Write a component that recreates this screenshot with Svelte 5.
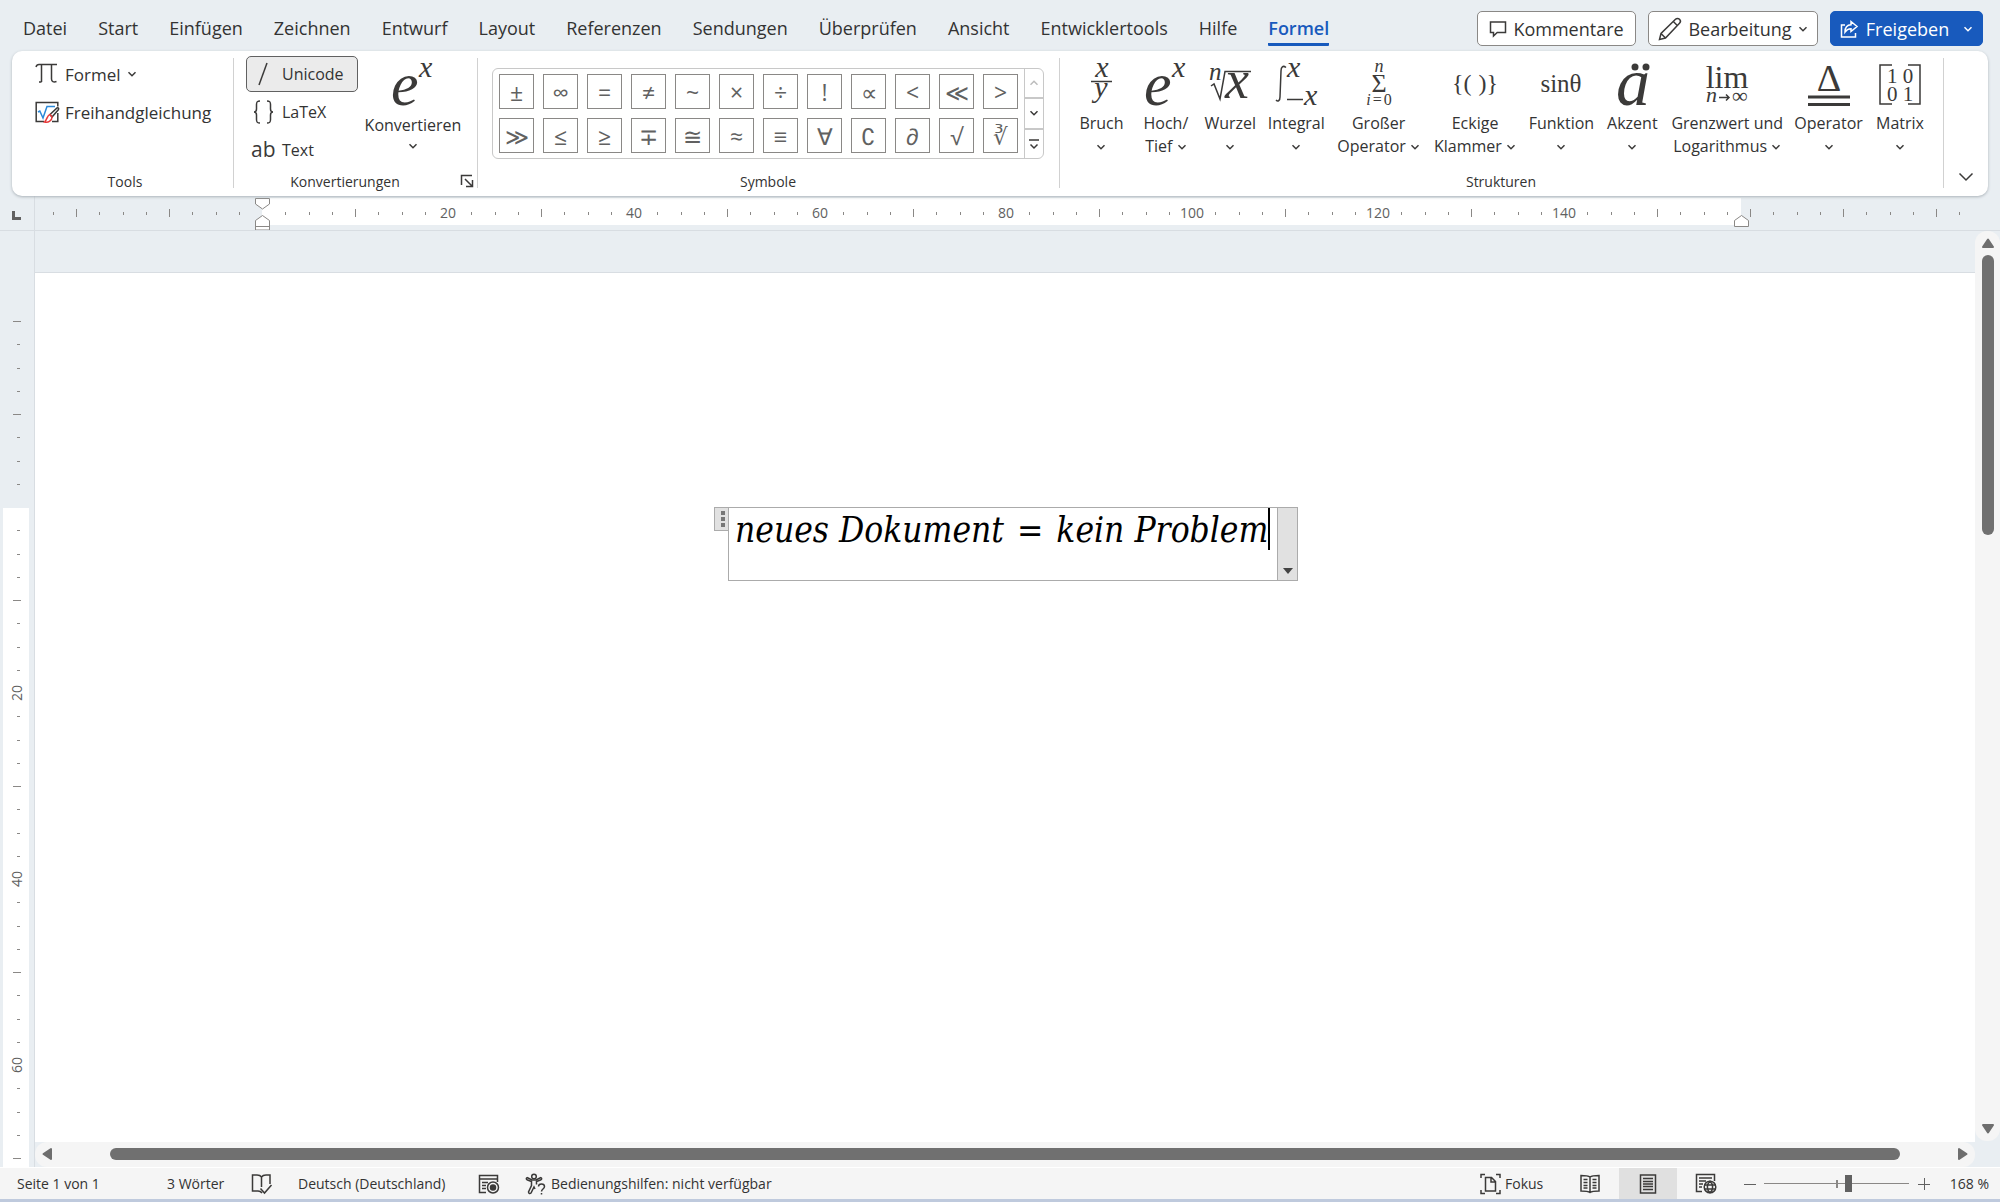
<script lang="ts">
  const tabs = [
    'Datei', 'Start', 'Einfügen', 'Zeichnen', 'Entwurf', 'Layout', 'Referenzen', 'Sendungen',
    'Überprüfen', 'Ansicht', 'Entwicklertools', 'Hilfe', 'Formel'
  ];
  let activeTab = $state('Formel');
  let zoom = $state(168);

  const symbols = [
    '±', '∞', '=', '≠', '~', '×', '÷', '!', '∝', '<', '≪', '>',
    '≫', '≤', '≥', '∓', '≅', '≈', '≡', '∀', '∁', '∂', '√', '∛'
  ];

  const structures = [
    { id: 'fraction', lines: ['Bruch', ''] },
    { id: 'script', lines: ['Hoch/', 'Tief'] },
    { id: 'radical', lines: ['Wurzel', ''] },
    { id: 'integral', lines: ['Integral', ''] },
    { id: 'sum', lines: ['Großer', 'Operator'] },
    { id: 'bracket', lines: ['Eckige', 'Klammer'] },
    { id: 'function', lines: ['Funktion', ''] },
    { id: 'accent', lines: ['Akzent', ''] },
    { id: 'limit', lines: ['Grenzwert und', 'Logarithmus'] },
    { id: 'operator', lines: ['Operator', ''] },
    { id: 'matrix', lines: ['Matrix', ''] }
  ];

  // one ruler step is 2.5 mm, every eighth step carries a number
  const step = 23.25;
  const range = (from: number, to: number) =>
    Array.from({ length: to - from + 1 }, (_, i) => from + i).filter((n) => n !== 0);
  const hTicks = range(-9, 73);
  const vTicks = range(-8, 28);
  const hPos = (n: number) => Math.round(262 + n * step);
  const vPos = (n: number) => Math.round(276 + n * step);
</script>

{#snippet chevron()}
  <svg class="chevron" width="10" height="10" viewBox="0 0 10 10"><path d="M1.5 3.2 5 6.7 8.5 3.2" /></svg>
{/snippet}

{#snippet scriptIcon()}
  <text x="0" y="43" font-size="62">e</text>
  <text x="28" y="15" font-size="30">x</text>
{/snippet}

<div class="app">
  <header>
    <nav>
      {#each tabs as tab}
        <button class="tab" class:active={tab === activeTab} onclick={() => (activeTab = tab)}>{tab}</button>
      {/each}
    </nav>
    <div class="actions">
      <button class="action comments">
        <svg width="18" height="18" viewBox="0 0 18 18"><path d="M1.5 2h15v10.5H8.2L4.5 16v-3.5h-3z" /></svg>
        Kommentare
      </button>
      <button class="action editing">
        <svg width="24" height="24" viewBox="0 0 24 24"><path d="m1.5 22.500 1.500-6L17.500 2.300a2.800 2.800 0 0 1 4 4L7.500 21zM15.300 4.500l4 4M3 16.500 7.500 21" /></svg>
        Bearbeitung {@render chevron()}
      </button>
      <button class="action share">
        <svg width="18" height="18" viewBox="0 0 18 18"><path d="M5 5H1.500v12h14v-4M11 1.500l6 5-6 5V8.800c-3 0-4.500 1-6 3.200 0-4 2-7 6-7.200z" /></svg>
        Freigeben {@render chevron()}
      </button>
    </div>
  </header>

  <section class="ribbon">
    <div class="group tools">
      <div class="stack">
        <button class="row">
          <svg width="24" height="24" viewBox="0 0 24 24"><path d="M1 5c.5-2 1.500-2.500 3-2.500h18M6.500 2.500V20M6.500 20H4M16.500 2.500V17c0 2.500 2 3.500 5 2.500" /></svg>
          Formel {@render chevron()}
        </button>
        <button class="row">
          <svg width="24" height="24" viewBox="0 0 24 24">
            <path d="M9 21.500H1.200v-19h21.600v4M22.800 13v8.500H17" />
            <path class="blue" d="m3 12 1.800-1L8 18l4-11.500h8" />
            <path d="M15 14.500 22 8c1.500-.5 2 .5 1.500 1.500L17 17z" />
            <path class="red" d="M15 14.500c-3 .5-2.500 5-5.500 7.500 4 1 7.500-1.500 7.500-5z" />
          </svg>
          Freihandgleichung
        </button>
      </div>
      <div class="caption"><span>Tools</span></div>
    </div>

    <div class="group conversions">
      <div class="content">
        <div class="stack">
          <button class="row format selected">
            <svg width="24" height="24" viewBox="0 0 24 24"><path d="M15 1 7 23" /></svg>
            Unicode
          </button>
          <button class="row format">
            <svg width="24" height="24" viewBox="0 0 24 24"><path d="M8 1C5 1 4.500 2 4.500 4.500V9c0 2-1 3-2.500 3 1.500 0 2.500 1 2.500 3v4.500C4.500 22 5 23 8 23M15 1c3 0 3.500 1 3.500 3.500V9c0 2 1 3 2.500 3-1.500 0-2.500 1-2.500 3v4.500c0 2.500-.5 3.500-3.500 3.500" /></svg>
            LaTeX
          </button>
          <button class="row format">
            <svg width="24" height="24" viewBox="0 0 24 24"><text x="-1" y="19" font-size="21">ab</text></svg>
            Text
          </button>
        </div>
        <button class="convert">
          <svg class="math" width="44" height="48" viewBox="0 0 44 48">{@render scriptIcon()}</svg>
          <span>Konvertieren</span>
          {@render chevron()}
        </button>
      </div>
      <div class="caption">
        <span>Konvertierungen</span>
        <button class="launcher" aria-label="Konvertierungsoptionen">
          <svg width="14" height="14" viewBox="0 0 14 14"><path d="M1.500 11V1.500H12M5 5l7 7M12.500 6v6.500H6" /></svg>
        </button>
      </div>
    </div>

    <div class="group symbols">
      <div class="gallery">
        <div class="cells">
          {#each symbols as symbol}
            <button class="cell">{symbol}</button>
          {/each}
        </div>
        <div class="pager">
          <button class="off" aria-label="Zeile nach oben"><svg class="chevron" width="10" height="10" viewBox="0 0 10 10"><path d="M1.500 6.700 5 3.200l3.500 3.500" /></svg></button>
          <button aria-label="Zeile nach unten">{@render chevron()}</button>
          <button aria-label="Weitere Symbole"><svg class="chevron" width="12" height="14" viewBox="0 0 12 14"><path d="M1 3h10M2.500 7.500 6 11l3.500-3.500" /></svg></button>
        </div>
      </div>
      <div class="caption"><span>Symbole</span></div>
    </div>

    <div class="group structures">
      <div class="structure-list">
        {#each structures as item}
          <button class="structure">
            <svg class="math" width="44" height="48" viewBox="0 0 44 48">
              {#if item.id === 'fraction'}
                <text x="23" y="15" font-size="30" text-anchor="middle">x</text>
                <path d="M12 19.500h21" />
                <text x="22" y="35" font-size="30" text-anchor="middle">y</text>
              {:else if item.id === 'script'}
                {@render scriptIcon()}
              {:else if item.id === 'radical'}
                <text x="1" y="18" font-size="25">n</text>
                <path d="m3 24 3-2 6 15L17 9.500h26" />
                <text x="17" y="36" font-size="54">x</text>
              {:else if item.id === 'integral'}
                <path d="M2 38c2 2 4 .5 4-3L7 9c0-4 2-6 5-3.500" />
                <text x="13" y="15" font-size="30">x</text>
                <path d="M13 37.500h16" />
                <text x="30" y="43" font-size="30">x</text>
              {:else if item.id === 'sum'}
                <text x="22" y="10" font-size="18" text-anchor="middle">n</text>
                <text class="upright" x="22" y="30" font-size="26" text-anchor="middle">Σ</text>
                <text x="22" y="43" font-size="16" text-anchor="middle"><tspan>i</tspan><tspan class="upright" dx="2">=</tspan><tspan class="upright" dx="2">0</tspan></text>
              {:else if item.id === 'bracket'}
                <text class="upright" x="-1" y="29" font-size="24">&#123;(</text>
                <text class="upright" x="45" y="29" font-size="24" text-anchor="end">)&#125;</text>
              {:else if item.id === 'function'}
                <text class="upright" x="22" y="30" font-size="25" text-anchor="middle">sinθ</text>
              {:else if item.id === 'accent'}
                <text x="6" y="43" font-size="68">a</text>
                <circle cx="25" cy="5" r="3.500" /><circle cx="36" cy="5" r="3.500" />
              {:else if item.id === 'limit'}
                <text class="upright" x="22" y="26" font-size="32" text-anchor="middle">lim</text>
                <text x="1" y="40" font-size="22">n</text>
                <path d="M14 35.500h10M21 32.500l3 3-3 3" />
                <text class="upright" x="27" y="41" font-size="22">∞</text>
              {:else if item.id === 'operator'}
                <text class="upright" x="22" y="29" font-size="38" text-anchor="middle">Δ</text>
                <path class="thick" d="M1 35h42M1 42.500h42" />
              {:else}
                <path d="M14 3H2v39h12M30 3h12v39H30" />
                <text class="upright" x="22" y="21" font-size="21" text-anchor="middle">1 0</text>
                <text class="upright" x="22" y="39" font-size="21" text-anchor="middle">0 1</text>
              {/if}
            </svg>
            <span>{item.lines[0]}</span>
            <span>{item.lines[1]} {@render chevron()}</span>
          </button>
        {/each}
      </div>
      <div class="caption"><span>Strukturen</span></div>
    </div>

    <button class="collapse" aria-label="Menüband reduzieren">
      <svg width="16" height="10" viewBox="0 0 16 10"><path d="m1.500 1.500 6.500 6.500 6.500-6.500" /></svg>
    </button>
  </section>

  <div class="ruler">
    <svg width="100%" height="34">
      <path class="tabstop" d="M13.500 15v7.500H21" />
      <path class="edge" d="M34.500 0v34" />
      <rect class="paper" x="262" y="2" width="1479" height="27" />
      {#each hTicks as n}
        {#if n % 8 === 0 && n > 0 && n < 64}
          <text x={hPos(n)} y="22" text-anchor="middle">{n * 2.5}</text>
        {:else if n % 4 === 0}
          <path d="M{hPos(n) + 0.5} 13v8" />
        {:else}
          <path d="M{hPos(n) + 0.5} 16v3" />
        {/if}
      {/each}
      <path class="marker" d="M255.500 2.500h14V8l-7 5-7-5z" />
      <path class="marker" d="M255.500 34V24.500l7-5 7 5V34zM255.500 30.500h14" />
      <path class="marker" d="M1734.500 30.500v-6l7-5 7 5v6z" />
    </svg>
  </div>

  <div class="workspace">
    <div class="v-ruler">
      <svg width="34" height="100%">
        <rect class="paper" x="3" y="277" width="26" height="100%" />
        {#each vTicks as n}
          {#if n % 8 === 0 && n > 0}
            <text transform="translate(22 {vPos(n)}) rotate(-90)" text-anchor="middle">{n * 2.5}</text>
          {:else if n % 4 === 0}
            <path d="M13 {vPos(n) + 0.5}h8" />
          {:else}
            <path d="M17 {vPos(n) + 0.5}h3" />
          {/if}
        {/each}
      </svg>
    </div>

    <div class="canvas">
      <main class="page">
        <div class="equation">
          <span class="handle"><i></i><i></i><i></i></span>
          <div class="formula">
            <span>neues Dokument <span class="relation">=</span> kein Problem</span>
            <span class="caret"></span>
          </div>
          <button class="drop" aria-label="Formeloptionen">
            <svg width="12" height="8" viewBox="0 0 12 8"><path d="M1 1h10L6 7z" /></svg>
          </button>
        </div>
      </main>
      <div class="h-scroll">
        <svg width="12" height="14" viewBox="0 0 12 14"><path d="M10 2v10L2.500 7z" /></svg>
        <div class="track"><div class="thumb"></div></div>
        <svg width="12" height="14" viewBox="0 0 12 14"><path d="M2 2v10l7.500-5z" /></svg>
      </div>
    </div>

    <div class="v-scroll">
      <svg width="14" height="12" viewBox="0 0 14 12"><path d="M2 10h10L7 2.500z" /></svg>
      <div class="track"><div class="thumb"></div></div>
      <svg width="14" height="12" viewBox="0 0 14 12"><path d="M2 2h10L7 9.500z" /></svg>
    </div>
  </div>

  <footer>
    <div class="status-left">
      <span class="pages">Seite 1 von 1</span>
      <span class="words">3 Wörter</span>
      <button class="proof" aria-label="Rechtschreibprüfung">
        <svg width="22" height="22" viewBox="0 0 22 22"><path d="M10.500 4C9.500 2.500 8 2 6 2H1.500v16H7c2 0 3 .5 4 2M10.500 4c1-1.500 2.500-2 4.500-2h4v9M10.500 4v10M9.500 15.500l4 4.500 7-8" /></svg>
      </button>
      <span class="lang">Deutsch (Deutschland)</span>
      <button class="macro" aria-label="Makro aufzeichnen">
        <svg width="22" height="20" viewBox="0 0 22 20"><path d="M8 18.500H1.500v-17h18V8M1.500 5h18M4 8.500h6M4 11.500h4M4 14.500h4" /><circle cx="15" cy="13.500" r="5.500" /><circle class="solid" cx="15" cy="13.500" r="2.500" /></svg>
      </button>
      <span class="access">
        <svg width="22" height="22" viewBox="0 0 22 22"><circle cx="9" cy="3.500" r="2.300" /><path d="M2 4.500C1 5.500 1 6.500 2.500 7L6.500 8.500v4L3.500 19c0 1.500 1.500 2 2.500 1l3-6 1 2M16 4.500c1 1 1 2-.5 2.500l-4 1.500v3M2 4.500 7 7h4l5-2.500M13.500 13.500c0-3.500 6-3.500 6 0 0 2.500-3 2.500-3 5M16.500 20v1.500" /></svg>
        Bedienungshilfen: nicht verfügbar
      </span>
    </div>
    <div class="status-right">
      <button class="focus">
        <svg width="21" height="22" viewBox="0 0 21 22"><path d="M1 5V1.500h4M16 1.500h4V5M1 17v3.500h4M16 20.500h4V17M5.500 4.500h6l4 4V18h-10zM11 4.500V9h4.500" /></svg>
        Fokus
      </button>
      <button class="view" aria-label="Lesemodus">
        <svg width="20" height="20" viewBox="0 0 20 20"><path d="M10 3C8 1.500 4 1.500 1 1.500V17c3 0 7 0 9 1.500 2-1.500 6-1.500 9-1.500V1.500c-3 0-7 0-9 1.500zM10 3v15M3.500 5.500h4M3.500 8.500h4M3.500 11.500h4M3.500 14h4M12.500 5.500h4M12.500 8.500h4M12.500 11.500h4M12.500 14h4" /></svg>
      </button>
      <button class="view current" aria-label="Seitenlayout">
        <svg width="18" height="20" viewBox="0 0 18 20"><path d="M1.500 1h15v18h-15zM4 4.500h10M4 7.500h10M4 10h10M4 12.500h10M4 15.500h10" /></svg>
      </button>
      <button class="view" aria-label="Weblayout">
        <svg width="22" height="21" viewBox="0 0 22 21"><path d="M7 18.500H1.500v-17h18V8M4 5h13M4 8h7M4 11h4M4 14h3" /><circle cx="15" cy="14" r="5.800" /><path d="M9.500 12h11M9.500 16h11M15 8.200c-3.500 3-3.500 8.600 0 11.600 3.500-3 3.500-8.600 0-11.600z" /></svg>
      </button>
      <button class="step" aria-label="Verkleinern"><svg width="12" height="12" viewBox="0 0 12 12"><path d="M0 6.500h12" /></svg></button>
      <input type="range" min="10" max="280" aria-label="Zoom" bind:value={zoom} />
      <button class="step" aria-label="Vergrößern"><svg width="12" height="12" viewBox="0 0 12 12"><path d="M0 6.500h12M6.500 0v12" /></svg></button>
      <span class="percent">{zoom} %</span>
    </div>
  </footer>
</div>

<style>
  :global(body) {
    margin: 0;
    background: #e9eef2;
  }

  .app {
    min-height: 100vh;
    display: flex;
    flex-direction: column;
    box-sizing: border-box;
    border-bottom: 3px solid #bfcadd;
    font-family: 'Open Sans', 'Noto Sans', sans-serif;
    color: #333;
  }

  .app * {
    box-sizing: border-box;
  }

  button {
    border: 0;
    padding: 0;
    background: none;
    font: inherit;
    color: inherit;
  }

  svg {
    display: block;
    flex: none;
    overflow: visible;
    fill: none;
    stroke: #3b3a39;
    stroke-width: 1.5;
  }

  svg text {
    fill: #3b3a39;
    stroke: none;
  }

  .chevron {
    display: inline-block;
  }

  header {
    display: flex;
    justify-content: space-between;
    height: 51px;
    padding: 0 17px 0 23px;
  }

  nav {
    display: flex;
    gap: 31px;
    padding-top: 14px;
    font-size: 18px;
    line-height: 29px;
  }

  .tab {
    height: 32px;
    border-bottom: 3px solid transparent;
    border-radius: 1px;
    white-space: nowrap;
  }

  .tab.active {
    color: #185abd;
    font-weight: 600;
    border-color: #185abd;
  }

  .actions {
    display: flex;
    gap: 12px;
    padding-top: 11px;
    font-size: 18px;
  }

  .action {
    display: flex;
    align-items: center;
    justify-content: center;
    gap: 6px;
    height: 35px;
    border: 1px solid #8a8886;
    border-radius: 5px;
    background: #fff;
    white-space: nowrap;
  }

  .comments {
    width: 159px;
  }

  .editing {
    width: 170px;
  }

  .share {
    width: 153px;
    gap: 8px;
    border-color: #185abd;
    background: #185abd;
    color: #fff;
  }

  .share svg {
    stroke: #fff;
  }

  .share .chevron {
    margin-left: 6px;
  }

  .ribbon {
    position: relative;
    display: flex;
    height: 145px;
    margin: 0 12px;
    border-radius: 10px;
    background: #fff;
    box-shadow: 0 1px 3px #aab2b8;
    font-size: 16px;
  }

  .group {
    display: flex;
    flex-direction: column;
    justify-content: space-between;
    padding-bottom: 4px;
    background: linear-gradient(#d1d1d1, #d1d1d1) right 7px / 1px 130px no-repeat;
  }

  .tools {
    width: 222px;
    padding-left: 16px;
  }

  .conversions {
    width: 244px;
    padding-left: 12px;
  }

  .symbols {
    width: 582px;
    padding: 17px 16px 4px 14px;
  }

  .structures {
    flex: 1;
    padding: 0 12px 4px 10px;
  }

  .content {
    display: flex;
  }

  .stack {
    display: flex;
    flex-direction: column;
    gap: 2px;
    padding-top: 5px;
  }

  .row {
    display: flex;
    align-items: center;
    gap: 6px;
    height: 36px;
    padding-left: 7px;
    white-space: nowrap;
  }

  .tools .row {
    font-size: 17px;
  }

  .blue {
    stroke: #2b88d8;
  }

  .red {
    stroke: #e83b3b;
  }

  .format {
    width: 112px;
    padding-left: 5px;
    border: 1px solid transparent;
    border-radius: 5px;
  }

  .selected {
    border-color: #616161;
    background: #ebebeb;
  }

  .convert {
    display: flex;
    flex-direction: column;
    align-items: center;
    width: 110px;
    padding-top: 11px;
    line-height: 23px;
  }

  .convert span {
    padding: 4px 0;
  }

  .caption {
    display: flex;
    align-items: center;
    height: 22px;
    font-size: 14px;
    text-align: center;
  }

  .caption span {
    flex: 1;
  }

  .tools .caption {
    padding-right: 12px;
  }

  .conversions .caption {
    margin-left: -12px;
  }

  .conversions .caption span {
    padding-right: 4px;
  }

  .launcher {
    width: 18px;
  }

  .gallery {
    display: flex;
    height: 91px;
    border: 1px solid #c8c8c8;
    border-radius: 6px;
    overflow: hidden;
  }

  .cells {
    flex: 1;
    display: grid;
    grid-template-columns: repeat(12, 35px);
    grid-auto-rows: 35px;
    gap: 9px;
    padding: 5px 6px;
  }

  .cell {
    border: 1px solid #8a8886;
    color: #616161;
    font-size: 23px;
    line-height: 30px;
  }

  .pager {
    display: flex;
    flex-direction: column;
    width: 21px;
    border-left: 1px solid #c8c8c8;
  }

  .pager button {
    flex: 1;
    display: flex;
    align-items: center;
    justify-content: center;
  }

  .pager button + button {
    border-top: 2px solid #c8c8c8;
  }

  .off svg {
    stroke: #bdbdbd;
  }

  .structure-list {
    display: grid;
    grid-template-columns: 63fr 66fr 63fr 69fr 96fr 97fr 76fr 66fr 124fr 79fr 64fr;
    padding-top: 11px;
  }

  .structure {
    display: flex;
    flex-direction: column;
    align-items: center;
    line-height: 23px;
    white-space: nowrap;
  }

  .structure .math {
    margin-bottom: 2px;
  }

  .math text {
    font-family: 'Liberation Serif', serif;
    font-style: italic;
  }

  .math .upright {
    font-style: normal;
  }

  .math circle {
    fill: #3b3a39;
    stroke: none;
  }

  .math .thick {
    stroke-width: 3;
  }

  .collapse {
    display: flex;
    justify-content: center;
    align-items: flex-end;
    width: 44px;
    padding-bottom: 14px;
  }

  .ruler {
    height: 35px;
    border-bottom: 1px solid #d8dde2;
    overflow: hidden;
  }

  .ruler svg,
  .v-ruler svg {
    stroke: #8a8886;
    stroke-width: 1;
  }

  .ruler text,
  .v-ruler text {
    fill: #616161;
    font-size: 14px;
  }

  .paper {
    fill: #fff;
    stroke: none;
  }

  .marker {
    fill: #fff;
  }

  .edge {
    stroke: #d8dde2;
  }

  .ruler .tabstop {
    stroke: #616161;
    stroke-width: 3;
  }

  .workspace {
    flex: 1;
    display: flex;
  }

  .v-ruler {
    width: 35px;
    border-right: 1px solid #d8dde2;
    overflow: hidden;
  }

  .canvas {
    flex: 1;
    display: flex;
    flex-direction: column;
    padding-top: 41px;
  }

  .page {
    flex: 1;
    display: flex;
    justify-content: center;
    align-items: flex-start;
    padding: 234px 0 0 2px;
    border-top: 1px solid #d8dde2;
    background: #fff;
  }

  .equation {
    display: flex;
    align-items: flex-start;
    height: 74px;
  }

  .handle {
    display: flex;
    flex-direction: column;
    align-items: center;
    justify-content: space-between;
    width: 14px;
    height: 24px;
    padding: 3px 0 3px 3px;
    border: 1px solid #ababab;
    border-right: 0;
    background: #e1e1e1;
  }

  .handle i {
    width: 4px;
    height: 4px;
    background: #777;
  }

  .formula {
    display: flex;
    width: 550px;
    height: 74px;
    padding-left: 6px;
    border: 1px solid #ababab;
    color: #000;
    font-family: 'DejaVu Serif Condensed', 'DejaVu Serif', serif;
    font-size: 35px;
    font-style: italic;
    line-height: 44px;
    white-space: nowrap;
  }

  .relation {
    margin: 0 3px;
  }

  .caret {
    width: 2px;
    height: 42px;
    background: #000;
  }

  .drop {
    display: flex;
    align-items: flex-end;
    justify-content: center;
    width: 20px;
    height: 74px;
    padding-bottom: 5px;
    border: 1px solid #ababab;
    border-left: 0;
    background: #e1e1e1;
  }

  .drop path {
    fill: #444;
    stroke: none;
  }

  .h-scroll,
  .v-scroll {
    display: flex;
    align-items: center;
    background: #f5f5f5;
  }

  .h-scroll {
    height: 25px;
    padding: 0 6px 2px;
    border-radius: 12px;
  }

  .v-scroll {
    flex-direction: column;
    width: 25px;
    margin-bottom: 26px;
    padding: 6px 0;
    border-radius: 12px;
  }

  .h-scroll path,
  .v-scroll path {
    fill: #6e6e6e;
    stroke: #6e6e6e;
    stroke-width: 2;
    stroke-linejoin: round;
  }

  .track {
    flex: 1;
  }

  .thumb {
    border-radius: 6px;
    background: #707070;
  }

  .h-scroll .thumb {
    width: 94%;
    height: 12px;
    margin-left: 3%;
  }

  .v-scroll .thumb {
    width: 12px;
    height: 32%;
    margin-top: 6px;
  }

  footer {
    display: flex;
    justify-content: space-between;
    height: 32px;
    border-top: 1px solid #fff;
    background: #f5f5f5;
    font-size: 14px;
    line-height: 30px;
    white-space: nowrap;
  }

  .status-left,
  .status-right {
    display: flex;
    align-items: center;
  }

  .status-left {
    padding-left: 17px;
  }

  .pages {
    width: 150px;
  }

  .words {
    width: 84px;
  }

  .proof {
    width: 47px;
  }

  .lang {
    width: 180px;
  }

  .macro {
    width: 47px;
  }

  .access,
  .focus {
    display: flex;
    align-items: center;
    gap: 4px;
  }

  .focus {
    width: 81px;
  }

  .view {
    display: flex;
    align-items: center;
    justify-content: center;
    width: 58px;
    height: 31px;
  }

  .current {
    background: #e0e0e0;
  }

  .solid {
    fill: #3b3a39;
  }

  .step {
    width: 12px;
    margin-left: 9px;
  }

  .step svg {
    stroke: #616161;
    stroke-width: 1;
  }

  input[type='range'] {
    appearance: none;
    width: 145px;
    height: 20px;
    margin: 0 0 0 8px;
    background:
      linear-gradient(#8a8886, #8a8886) center / 2px 8px no-repeat,
      linear-gradient(#8a8886, #8a8886) center / 100% 1px no-repeat;
  }

  input[type='range']::-webkit-slider-thumb {
    appearance: none;
    width: 7px;
    height: 17px;
    background: #616161;
  }

  .percent {
    width: 70px;
    padding-right: 11px;
    text-align: right;
  }
</style>
